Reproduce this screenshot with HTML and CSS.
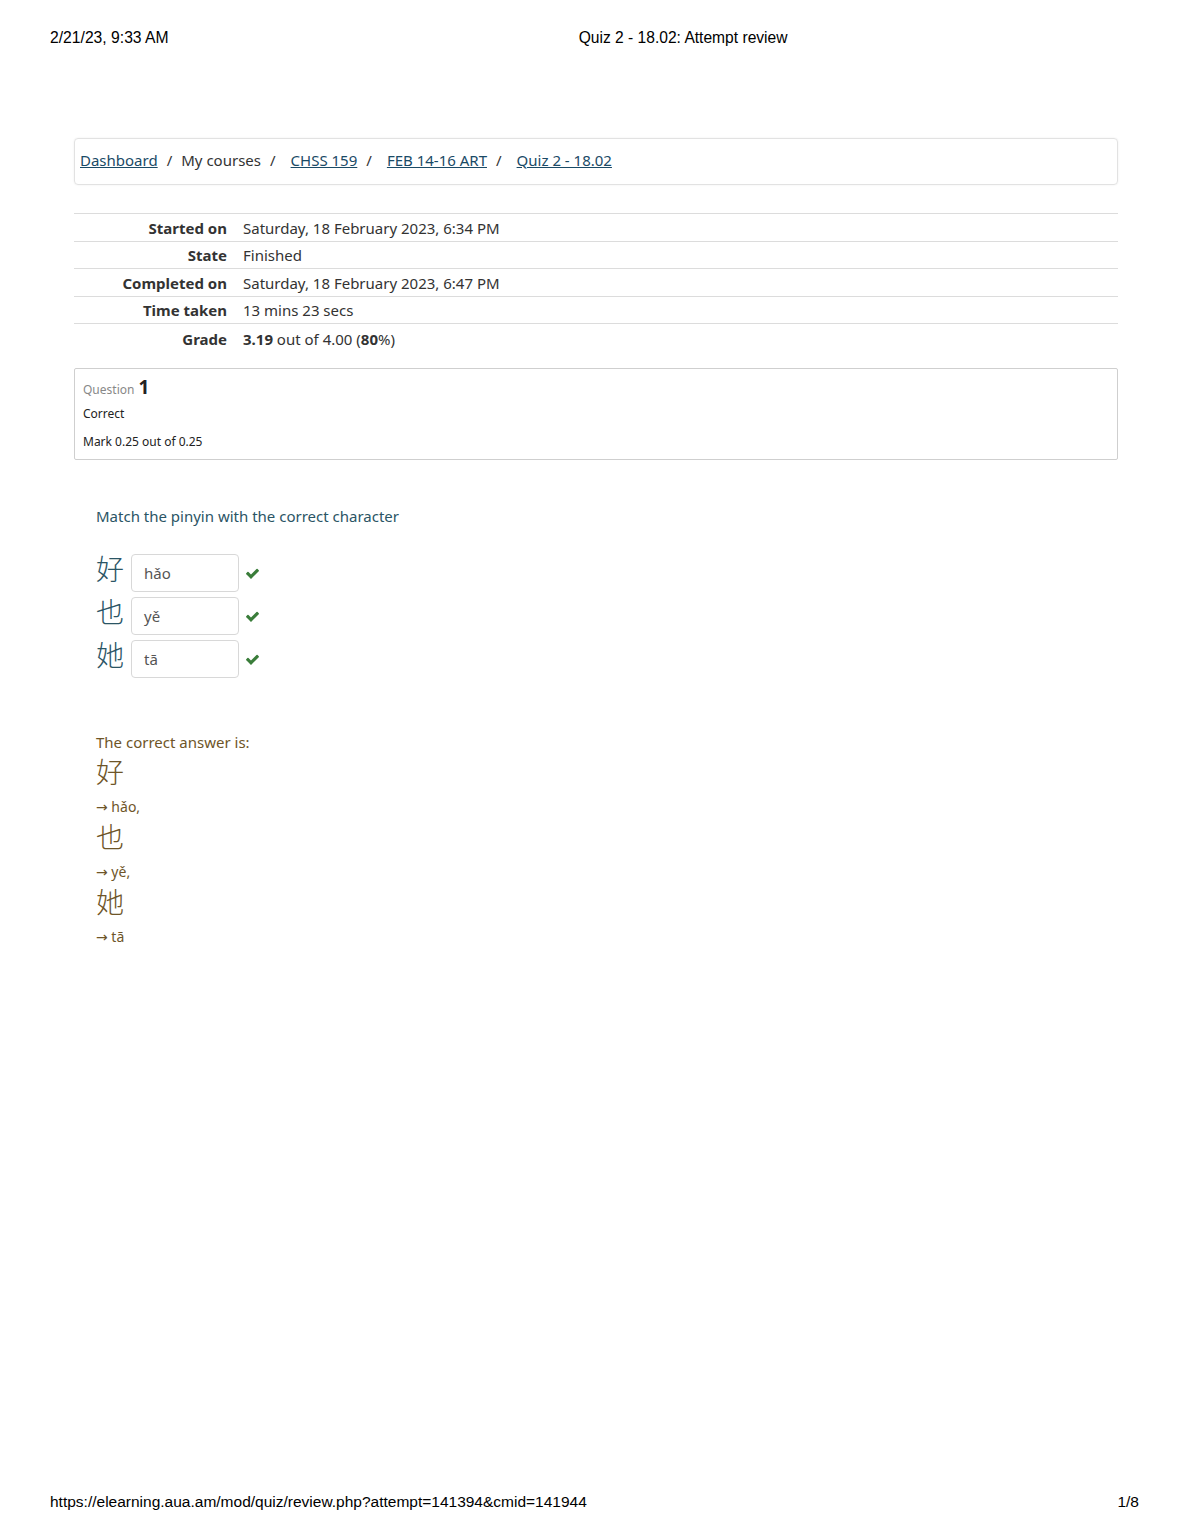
FILE: index.html
```html
<!DOCTYPE html>
<html lang="en">
<head>
<meta charset="utf-8">
<title>Quiz 2 - 18.02: Attempt review</title>
<link rel="stylesheet" href="styles.css">
</head>
<body>
<div class="page">
  <div class="print-header">
    <span class="ph-date">2/21/23, 9:33 AM</span>
    <span class="ph-title">Quiz 2 - 18.02: Attempt review</span>
  </div>

  <main class="content">
    <nav class="breadcrumb">
      <a href="#">Dashboard</a><span class="sep">/</span><span class="crumb-text">My courses</span><span class="sep">/</span>
      <a href="#" class="crumb-gap">CHSS 159</a><span class="sep">/</span>
      <a href="#" class="crumb-gap">FEB 14-16 ART</a><span class="sep">/</span>
      <a href="#" class="crumb-gap">Quiz 2 - 18.02</a>
    </nav>

    <table class="summary">
      <tr><th>Started on</th><td>Saturday, 18 February 2023, 6:34 PM</td></tr>
      <tr><th>State</th><td>Finished</td></tr>
      <tr><th>Completed on</th><td>Saturday, 18 February 2023, 6:47 PM</td></tr>
      <tr><th>Time taken</th><td>13 mins 23 secs</td></tr>
      <tr class="grade"><th>Grade</th><td><b>3.19</b> out of 4.00 (<b>80</b>%)</td></tr>
    </table>

    <div class="qinfo">
      <div class="qno"><span class="qword">Question</span> <span class="qnum">1</span></div>
      <div class="qstate">Correct</div>
      <div class="qmark">Mark 0.25 out of 0.25</div>
    </div>

    <div class="qbody">
      <p class="qtext">Match the pinyin with the correct character</p>
      <div class="matches">
        <div class="mrow"><span class="hanzi">好</span><span class="field">hǎo</span><svg class="check" viewBox="0 0 1792 1792"><path d="M1671 566q0 40-28 68l-724 724-136 136q-28 28-68 28t-68-28l-136-136-362-362q-28-28-28-68t28-68l136-136q28-28 68-28t68 28l294 295 656-657q28-28 68-28t68 28l136 136q28 28 28 68z"/></svg></div>
        <div class="mrow"><span class="hanzi">也</span><span class="field">yě</span><svg class="check" viewBox="0 0 1792 1792"><path d="M1671 566q0 40-28 68l-724 724-136 136q-28 28-68 28t-68-28l-136-136-362-362q-28-28-28-68t28-68l136-136q28-28 68-28t68 28l294 295 656-657q28-28 68-28t68 28l136 136q28 28 28 68z"/></svg></div>
        <div class="mrow"><span class="hanzi">她</span><span class="field">tā</span><svg class="check" viewBox="0 0 1792 1792"><path d="M1671 566q0 40-28 68l-724 724-136 136q-28 28-68 28t-68-28l-136-136-362-362q-28-28-28-68t28-68l136-136q28-28 68-28t68 28l294 295 656-657q28-28 68-28t68 28l136 136q28 28 28 68z"/></svg></div>
      </div>

      <div class="rightanswer">
        <div class="ra-lead">The correct answer is:</div>
        <div class="ra-char">好</div>
        <div class="ra-pin"><span class="arrow">→</span> hǎo,</div>
        <div class="ra-char">也</div>
        <div class="ra-pin"><span class="arrow">→</span> yě,</div>
        <div class="ra-char">她</div>
        <div class="ra-pin"><span class="arrow">→</span> tā</div>
      </div>
    </div>
  </main>

  <div class="print-footer">
    <span>https://elearning.aua.am/mod/quiz/review.php?attempt=141394&amp;cmid=141944</span>
    <span>1/8</span>
  </div>
</div>
</body>
</html>
```

FILE: styles.css
```css
html, body {
  margin: 0;
  padding: 0;
  background: #fff;
}

.page {
  min-height: 1540px;
  display: flex;
  flex-direction: column;
  font-family: "Noto Sans", "Open Sans", sans-serif;
  color: #1d2125;
}

.print-header {
  display: flex;
  padding: 30px 0 0 50px;
  font-family: "Liberation Sans", Arial, sans-serif;
  font-size: 15.7px;
  line-height: 16px;
  color: #000;
}

.ph-title {
  margin-left: 410px;
  font-size: 15.6px;
}

.content {
  margin: 92px 0 0 74px;
  width: 1044px;
}

.breadcrumb {
  box-sizing: border-box;
  height: 47px;
  border: 1px solid #e2e2e2;
  border-radius: 4px;
  box-shadow: 0 0 2px rgba(0,0,0,0.08);
  display: flex;
  align-items: center;
  padding: 0 5px 4px;
  font-size: 15px;
  color: #333;
}

.breadcrumb a {
  color: #1a4a66;
  text-decoration: underline;
}

.breadcrumb .sep {
  margin: 0 9px;
  color: #333;
}

.breadcrumb .crumb-gap {
  margin-left: 6px;
}

.summary {
  margin-top: 28px;
  width: 100%;
  border-collapse: collapse;
  font-size: 15px;
}

.summary tr {
  border-top: 1px solid #dcdcdc;
}

.summary th {
  width: 153px;
  text-align: right;
  font-weight: 700;
  color: #333;
  padding: 1px 0 0;
  height: 25.5px;
}

.summary td {
  padding: 1px 0 0 16px;
  color: #333;
  height: 25.5px;
}

.summary tr.grade th,
.summary tr.grade td {
  height: 29px;
  padding-top: 0;
  padding-bottom: 2px;
  vertical-align: middle;
}

.summary b {
  font-weight: 700;
}

.qinfo {
  margin-top: 13px;
  border: 1px solid #cfcfcf;
  border-radius: 2px;
  padding: 5px 8px 9px;
  height: 76px;
  font-size: 12px;
  color: #222;
}

.qno {
  height: 24px;
  display: flex;
  align-items: baseline;
  color: #888;
}

.qword {
  font-size: 12px;
  margin-right: 4px;
}

.qnum {
  font-size: 19px;
  font-weight: 700;
  color: #222;
}

.qstate {
  margin-top: 6px;
  line-height: 20px;
}

.qmark {
  margin-top: 8px;
  line-height: 20px;
}

.qbody {
  padding-left: 22px;
}

.qtext {
  margin: 45px 0 0;
  font-size: 15px;
  line-height: 22px;
  color: #2b5565;
}

.matches {
  margin-top: 27px;
  display: flex;
  flex-direction: column;
  gap: 5px;
}

.mrow {
  display: flex;
  align-items: center;
  height: 38px;
}

.hanzi {
  font-family: "Noto Sans CJK SC", sans-serif;
  font-weight: 300;
  font-size: 28px;
  line-height: 32px;
  color: #2b5565;
  width: 35px;
  margin-bottom: 10px;
}

.field {
  box-sizing: border-box;
  width: 108px;
  height: 38px;
  border: 1px solid #d8d8d8;
  border-radius: 4px;
  display: flex;
  align-items: center;
  padding-left: 12px;
  font-size: 15px;
  color: #555;
}

.check {
  width: 15px;
  height: 15px;
  margin-left: 6px;
  fill: #3a7d3a;
}

.rightanswer {
  margin-top: 53px;
  color: #6e5528;
}

.ra-lead {
  font-size: 15px;
  line-height: 22px;
}

.ra-char {
  font-family: "Noto Sans CJK SC", sans-serif;
  font-weight: 300;
  font-size: 28px;
  line-height: 36px;
}

.ra-pin {
  font-size: 14px;
  line-height: 20px;
  margin: 8px 0 1px;
}

.arrow {
  font-family: "DejaVu Sans", sans-serif;
  font-size: 14px;
}

.print-footer {
  margin-top: auto;
  display: flex;
  justify-content: space-between;
  padding: 0 51px 29px 50px;
  font-family: "Liberation Sans", Arial, sans-serif;
  font-size: 15.5px;
  line-height: 18px;
  color: #000;
}
```
